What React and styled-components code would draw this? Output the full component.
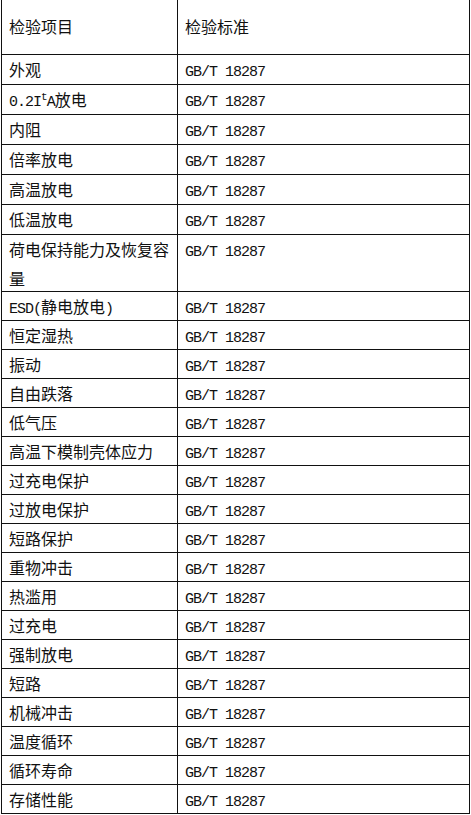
import React from 'react'
import styled, { createGlobalStyle } from 'styled-components'

const Global = createGlobalStyle`
  body {
    margin: 0;
    background: #fff;
  }
`

const Table = styled.div`
  margin-left: 1px;
  width: 469px;
  box-sizing: border-box;
  border-left: 1px solid #111;
  border-right: 1px solid #111;
  font-family: "Noto Sans CJK SC", sans-serif;
  font-size: 16px;
  color: #111;
`

const Row = styled.div`
  display: grid;
  grid-template-columns: 176px 1fr;
  height: ${p => p.$h}px;
  box-sizing: border-box;
  border-bottom: 1px solid #111;
`

const Cell = styled.div`
  display: flex;
  align-items: ${p => (p.$head ? 'center' : 'flex-start')};
  padding: ${p => (p.$head ? '0 7px 2px' : '0 7px')};
  line-height: 29px;
  border-right: ${p => (p.$last ? 'none' : '1px solid #111')};
  box-sizing: border-box;
`

const Text = styled.div`
  font-weight: 400;
`

const Mono = styled.span`
  font-family: "Liberation Mono", monospace;
  font-size: 15px;
  letter-spacing: -1px;
  white-space: pre;
`

const Sup = styled.sup`
  font-family: "Liberation Mono", monospace;
  font-size: 11px;
  line-height: 0;
  vertical-align: 6px;
  letter-spacing: -1px;
`

const Std = () => <Mono>GB/T 18287</Mono>

const rows = [
  { name: '外观', h: 30 },
  { name: <><Mono>0.2I</Mono><Sup>t</Sup><Mono>A</Mono>放电</>, h: 30 },
  { name: '内阻', h: 30 },
  { name: '倍率放电', h: 30 },
  { name: '高温放电', h: 30 },
  { name: '低温放电', h: 30 },
  { name: '荷电保持能力及恢复容量', h: 57 },
  { name: <><Mono>ESD(</Mono>静电放电<Mono>)</Mono></>, h: 29 },
  { name: '恒定湿热', h: 29 },
  { name: '振动', h: 29 },
  { name: '自由跌落', h: 29 },
  { name: '低气压', h: 29 },
  { name: '高温下模制壳体应力', h: 29 },
  { name: '过充电保护', h: 29 },
  { name: '过放电保护', h: 29 },
  { name: '短路保护', h: 29 },
  { name: '重物冲击', h: 29 },
  { name: '热滥用', h: 29 },
  { name: '过充电', h: 29 },
  { name: '强制放电', h: 29 },
  { name: '短路', h: 29 },
  { name: '机械冲击', h: 29 },
  { name: '温度循环', h: 29 },
  { name: '循环寿命', h: 29 },
  { name: '存储性能', h: 29 },
]

const App = () => {
  return (
    <>
      <Global />
      <Table>
        <Row $h={55}>
          <Cell $head><Text>检验项目</Text></Cell>
          <Cell $head $last><Text>检验标准</Text></Cell>
        </Row>
        {rows.map((r, i) => (
          <Row key={i} $h={r.h}>
            <Cell><Text>{r.name}</Text></Cell>
            <Cell $last><Text><Std /></Text></Cell>
          </Row>
        ))}
      </Table>
    </>
  )
}

export default App
